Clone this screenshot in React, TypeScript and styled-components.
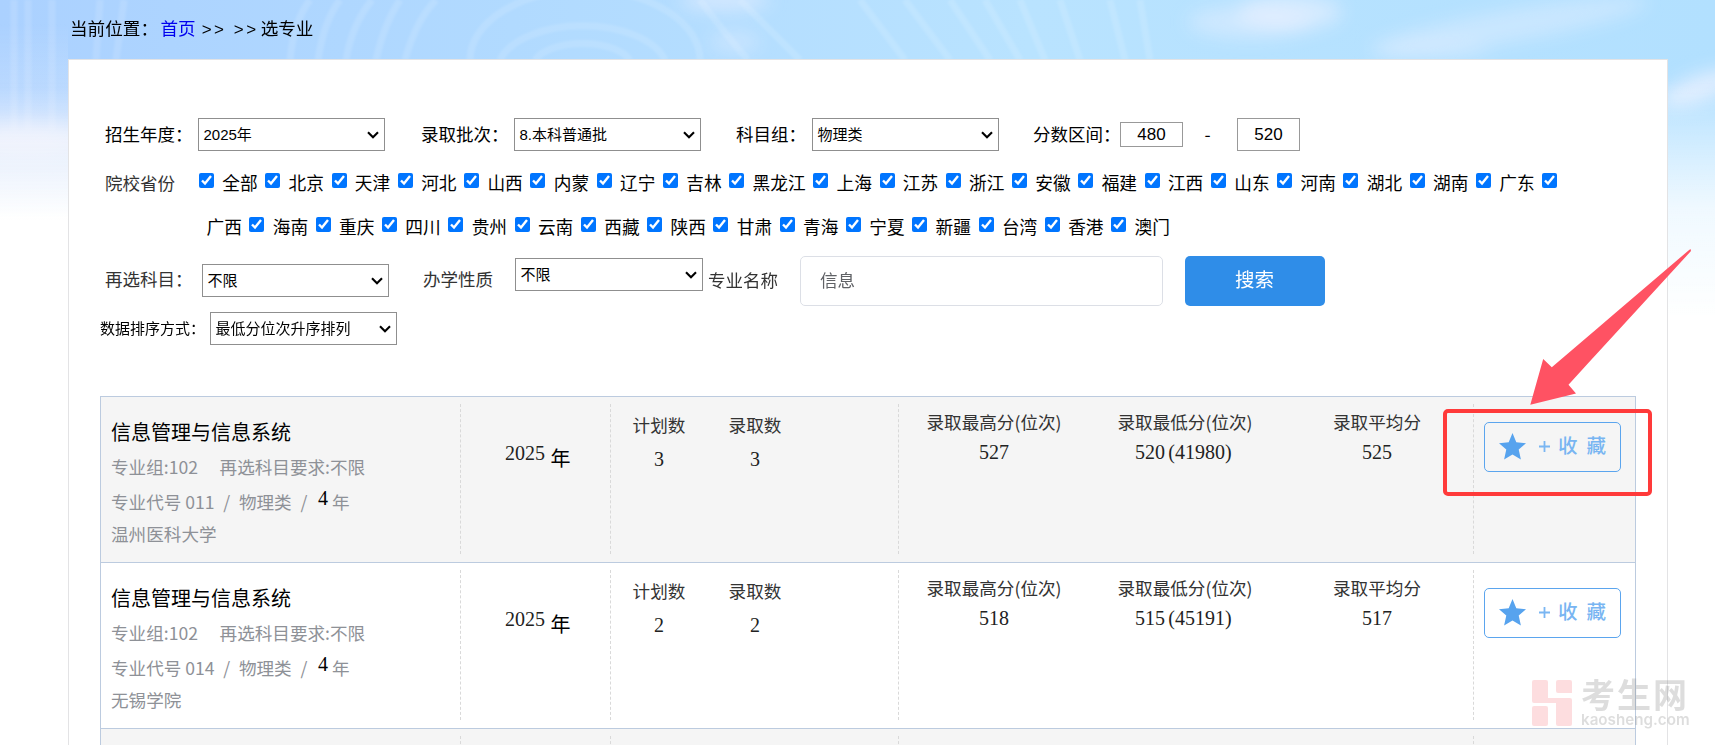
import React from 'react';
import styled, { createGlobalStyle } from 'styled-components';

const GlobalStyle = createGlobalStyle`
  * { box-sizing: border-box; }
  html, body { margin: 0; padding: 0; background: #fff; }
  body {
    font-family: "Noto Sans CJK SC", sans-serif;
    font-size: 17.6px;
    color: #000;
    overflow: hidden;
  }
`;

const Page = styled.div`
  position: relative;
  width: 1715px;
  height: 745px;
  overflow: hidden;
  padding-left: 68px;
`;

const Backdrop = styled.svg`
  position: absolute;
  left: 0;
  top: 0;
`;

const Breadcrumb = styled.nav`
  position: relative;
  height: 59px;
  padding-left: 2px;
  line-height: 55px;
  white-space: pre;
`;

const Crumb = styled.a`
  color: #0000ee;
  margin-left: 2.5px;
`;

const Arrows = styled.span`
  font-family: "Liberation Sans", sans-serif;
  font-size: 17px;
  letter-spacing: 2.5px;
  margin: 0 2px 0 6px;
`;

const Panel = styled.main`
  position: relative;
  width: 1600px;
  height: 760px;
  border: 1px solid #e3e3e5;
  background: #fff;
  padding: 58px 0 0 31px;
`;

const FilterRow = styled.div<{ $top?: number; $height: number; $left?: number; $align?: string }>`
  display: flex;
  align-items: ${p => p.$align ?? 'center'};
  height: ${p => p.$height}px;
  margin-top: ${p => p.$top ?? 0}px;
  padding-left: ${p => p.$left ?? 5}px;
`;

const Label = styled.label<{ $width: number; $gap?: number; $line?: number; $soft?: boolean; $small?: boolean }>`
  flex: none;
  width: ${p => p.$width}px;
  margin: 0 0 2px ${p => p.$gap ?? 0}px;
  line-height: ${p => p.$line ?? 31}px;
  color: ${p => (p.$soft ? '#333' : '#000')};
  font-size: ${p => (p.$small ? 15 : 17.5)}px;
  white-space: nowrap;
`;

const SelectBox = styled.div<{ $drop?: number; $width?: number }>`
  flex: none;
  display: flex;
  align-items: center;
  justify-content: space-between;
  width: ${p => p.$width ?? 187}px;
  height: 33px;
  margin-top: ${p => p.$drop ?? 0}px;
  padding: 0 5px 0 4.5px;
  border: 1px solid #8f8f8f;
  background: #fff;
  font: 15px/31px "Liberation Sans", "Noto Sans CJK SC", sans-serif;
`;

const ScoreInput = styled.div<{ $height: number }>`
  width: 63px;
  height: ${p => p.$height}px;
  border: 1px solid #999;
  font: 17px/1 "Liberation Sans", sans-serif;
  display: flex;
  align-items: center;
  justify-content: center;
`;

const Dash = styled.span`
  width: 54px;
  padding: 0 5px 3px 0;
  text-align: center;
`;

const Province = styled.label`
  display: flex;
  align-items: center;
  line-height: 42px;
  padding-bottom: 2px;
  font-size: 17.7px;
  white-space: nowrap;
`;

const Check = styled.input`
  flex: none;
  width: 15px;
  height: 15px;
  margin: 0 8.3px 4px 0;
`;

const LastCheck = styled(Check)`
  margin-bottom: 6px;
`;

const ProvinceName = styled.span`
  margin-right: 7.6px;
`;

const KeywordBox = styled.div`
  width: 363px;
  height: 50px;
  border: 1px solid #dcdfe6;
  border-radius: 5px;
  padding-left: 19px;
  line-height: 45px;
  color: #606266;
`;

const SearchButton = styled.button`
  width: 140px;
  height: 50px;
  margin-left: 22px;
  padding: 0 1px 4px 0;
  border: 0;
  border-radius: 5px;
  background: #2f8de8;
  color: #fff;
  font: 19.5px/46px "Noto Sans CJK SC", sans-serif;
`;

const Results = styled.section`
  width: 1536px;
  margin-top: 51px;
  border: 1px solid #bccbdf;
  border-bottom: 0;
`;

const ResultRow = styled.article<{ $shade: boolean }>`
  display: flex;
  height: 166px;
  padding: 7px 0 8px;
  border-bottom: 1px solid #bccbdf;
  background: ${p => (p.$shade ? '#f5f5f5' : '#fff')};
`;

const Cell = styled.div<{ $width: number }>`
  flex: none;
  display: flex;
  width: ${p => p.$width}px;
  height: 150px;
  border-right: 1px dashed #d9d9d9;
`;

const Major = styled.div`
  padding: 11px 0 0 10px;
  color: #8e9197;
  white-space: pre;
`;

const MajorName = styled.h3`
  margin: 0;
  height: 34px;
  color: #000;
  font-weight: 400;
  font-size: 20px;
  line-height: 33px;
`;

const MajorLine = styled.div<{ $height: number }>`
  height: ${p => p.$height}px;
  line-height: ${p => p.$height}px;
`;

const Slash = styled.span`
  margin: 0 8.7px;
`;

const Years = styled.span`
  display: inline-block;
  font: 20px/20px "Liberation Serif", serif;
  color: #000;
  margin: 0 4px 0 2px;
  transform: translateY(-4px);
`;

const YearCell = styled.div`
  display: flex;
  align-items: flex-start;
  padding: 34px 0 0 44px;
  font-size: 20px;
  line-height: 39px;
`;

const Num = styled.span<{ $line?: number }>`
  font-family: "Liberation Serif", serif;
  font-size: 20px;
  line-height: ${p => p.$line ?? 31}px;
  color: #222;
`;

const YearNum = styled(Num)`
  line-height: 31px;
  margin-right: 5.5px;
`;

const Paren = styled.span<{ $close?: boolean }>`
  display: inline-block;
  width: 10px;
  text-align: ${p => (p.$close ? 'left' : 'right')};
`;

const Stat = styled.div<{ $width: number; $top: number; $gap: number; $line: number }>`
  display: flex;
  flex-direction: column;
  align-items: center;
  width: ${p => p.$width}px;
  margin-left: ${p => p.$gap}px;
  padding-top: ${p => p.$top}px;
  line-height: ${p => p.$line}px;
  color: #333;
  white-space: nowrap;
`;

const CollectButton = styled.button`
  display: flex;
  align-items: center;
  width: 137px;
  height: 50px;
  margin: 18px 0 0 10px;
  padding: 0 0 2px 14px;
  border: 1.5px solid #5ba5ee;
  border-radius: 5px;
  background: transparent;
  color: #78b5f2;
  font: 500 19.5px/46px "Noto Sans CJK SC", sans-serif;
`;

const Plus = styled.svg`
  margin: 0 8px 0 13px;
`;

const CollectText = styled.span`
  letter-spacing: 9px;
  padding-bottom: 2px;
`;

const Callout = styled.div`
  position: absolute;
  left: 1443px;
  top: 409px;
  width: 209px;
  height: 87px;
  border: 4px solid #ff3a3a;
  border-radius: 5px;
`;

const Pointer = styled.svg`
  position: absolute;
  left: 1520px;
  top: 240px;
`;

const Watermark = styled.div`
  position: absolute;
  left: 1532px;
  top: 680px;
  display: flex;
  gap: 9px;
  color: rgba(130, 130, 130, 0.27);
`;

const WatermarkText = styled.div`
  display: flex;
  flex-direction: column;
`;

const WatermarkTitle = styled.span`
  font: 700 34px/27px "Noto Sans CJK SC", sans-serif;
  letter-spacing: 2px;
  height: 30px;
  white-space: nowrap;
`;

const WatermarkUrl = styled.span`
  font: 600 15.2px/18px Inter, sans-serif;
  margin-top: 1px;
  white-space: nowrap;
`;

const Sky = () => (
  <Backdrop width="1715" height="745" viewBox="0 0 1715 745">
    <defs>
      <linearGradient id="base" x1="0" x2="1" y1="0" y2="0">
        <stop offset="0" stopColor="#abd1ff" />
        <stop offset="0.3" stopColor="#b1daff" />
        <stop offset="0.6" stopColor="#b9e3ff" />
        <stop offset="1" stopColor="#b2e0ff" />
      </linearGradient>
      <linearGradient id="fadeLeft" x1="0" x2="0" y1="0" y2="1">
        <stop offset="0.1" stopColor="#fff" stopOpacity="0" />
        <stop offset="0.4" stopColor="#f8f7fd" stopOpacity="0.2" />
        <stop offset="0.66" stopColor="#f5f6fc" stopOpacity="0.8" />
        <stop offset="1" stopColor="#fff" />
      </linearGradient>
      <linearGradient id="fadeRight" x1="0" x2="0" y1="0" y2="1">
        <stop offset="0.25" stopColor="#fff" stopOpacity="0" />
        <stop offset="0.65" stopColor="#fff" stopOpacity="0.8" />
        <stop offset="1" stopColor="#fff" />
      </linearGradient>
      <filter id="soft" x="-30%" y="-100%" width="160%" height="300%">
        <feGaussianBlur stdDeviation="9" />
      </filter>
      <filter id="hazy" x="-5%" y="-10%" width="110%" height="120%">
        <feGaussianBlur stdDeviation="1" />
      </filter>
    </defs>
    <rect width="1715" height="320" fill="url(#base)" />
    <g fill="none" stroke="#fff" strokeOpacity="0.12" strokeWidth="7" filter="url(#hazy)">
      <path d="M14 0V130M28 0V130M52 0V130M100 0L96 60M124 0L116 60M290 60Q294 20 310 0M318 60Q324 20 340 0M346 60Q352 24 372 0M376 60Q384 24 400 0M405 60Q416 20 436 0" />
      <path d="M470 60A115 70 0 0 1 700 60M500 60A85 45 0 0 1 665 60M535 60A50 24 0 0 1 630 60M700 0Q730 40 748 60M740 0Q780 40 800 60" />
      <path d="M860 0L905 60M905 0L950 60M950 0L990 60M985 0L1020 60M1020 0L1045 60M1060 0L1080 60M1110 0L1125 60M1140 0L1150 60" />
    </g>
    <g fill="#f3f3ff">
      <g filter="url(#soft)">
        <ellipse cx="1250" cy="22" rx="62" ry="16" opacity="0.4" />
        <ellipse cx="1290" cy="12" rx="52" ry="18" opacity="0.5" />
        <ellipse cx="725" cy="0" rx="45" ry="10" opacity="0.55" />
        <ellipse cx="735" cy="42" rx="25" ry="10" opacity="0.35" />
        <ellipse cx="1510" cy="26" rx="140" ry="16" opacity="0.35" transform="rotate(-10 1510 26)" />
        <ellipse cx="1430" cy="50" rx="60" ry="10" opacity="0.25" />
      </g>
      <g filter="url(#soft)">
        <ellipse cx="1700" cy="88" rx="42" ry="13" opacity="0.7" transform="rotate(-20 1700 88)" />
        <ellipse cx="25" cy="140" rx="65" ry="16" opacity="0.7" />
      </g>
    </g>
    <rect width="68" height="220" fill="url(#fadeLeft)" />
    <rect y="220" width="68" height="110" fill="#fff" />
    <rect x="1667" width="48" height="320" fill="url(#fadeRight)" />
    <rect y="319" width="1715" height="426" fill="#fff" />
  </Backdrop>
);

const Select = ({ value, drop, width }: { value: string; drop?: number; width?: number }) => (
  <SelectBox $drop={drop} $width={width}>
    <span>{value}</span>
    <svg width="12" height="8" viewBox="0 0 12 8">
      <path d="M1 1.2L6 6.2L11 1.2" fill="none" stroke="#000" strokeWidth="2.1" />
    </svg>
  </SelectBox>
);

const firstLine = ['全部', '北京', '天津', '河北', '山西', '内蒙', '辽宁', '吉林', '黑龙江', '上海', '江苏', '浙江', '安徽', '福建', '江西', '山东', '河南', '湖北', '湖南', '广东'];
const secondLine = ['海南', '重庆', '四川', '贵州', '云南', '西藏', '陕西', '甘肃', '青海', '宁夏', '新疆', '台湾', '香港', '澳门'];

const ProvinceOption = ({ name }: { name: string }) => (
  <Province>
    <Check type="checkbox" defaultChecked />
    <ProvinceName>{name}</ProvinceName>
  </Province>
);

interface Result {
  name: string;
  group: string;
  code: string;
  school: string;
  plan: number;
  admitted: number;
  high: number;
  low: number;
  rank: number;
  average: number;
}

const results: Result[] = [
  { name: '信息管理与信息系统', group: '102', code: '011', school: '温州医科大学', plan: 3, admitted: 3, high: 527, low: 520, rank: 41980, average: 525 },
  { name: '信息管理与信息系统', group: '102', code: '014', school: '无锡学院', plan: 2, admitted: 2, high: 518, low: 515, rank: 45191, average: 517 },
];

const ResultItem = ({ item, shade }: { item: Result; shade: boolean }) => (
  <ResultRow $shade={shade}>
    <Cell $width={360}>
      <Major>
        <MajorName>{item.name}</MajorName>
        <MajorLine $height={35}>专业组:{item.group}{'\u2003 '}再选科目要求:不限</MajorLine>
        <MajorLine $height={35}>
          专业代号 {item.code}<Slash>/</Slash>物理类<Slash>/</Slash><Years>4</Years>年
        </MajorLine>
        <MajorLine $height={29}>{item.school}</MajorLine>
      </Major>
    </Cell>
    <Cell $width={150}>
      <YearCell><YearNum>2025</YearNum>年</YearCell>
    </Cell>
    <Cell $width={288}>
      <Stat $width={54} $gap={21} $top={4} $line={34}><span>计划数</span><Num $line={35}>{item.plan}</Num></Stat>
      <Stat $width={54} $gap={42} $top={4} $line={34}><span>录取数</span><Num $line={35}>{item.admitted}</Num></Stat>
    </Cell>
    <Cell $width={575}>
      <Stat $width={134} $gap={28} $top={2} $line={31}><span>录取最高分(位次)</span><Num>{item.high}</Num></Stat>
      <Stat $width={134} $gap={57} $top={2} $line={31}>
        <span>录取最低分(位次)</span>
        <Num>{item.low}<Paren>(</Paren>{item.rank}<Paren $close>)</Paren></Num>
      </Stat>
      <Stat $width={88} $gap={81} $top={2} $line={31}><span>录取平均分</span><Num>{item.average}</Num></Stat>
    </Cell>
    <CollectButton>
      <svg width="27" height="27" viewBox="0 0 27 27">
        <path d="M13.5 0L17.3 9.3L27 10.2L19.7 16.6L21.9 26.5L13.5 21.5L5.1 26.5L7.3 16.6L0 10.2L9.7 9.3Z" fill="#57a3ee" />
      </svg>
      <Plus width="11" height="11" viewBox="0 0 11 11">
        <path d="M5.5 0V11M0 5.5H11" stroke="#7ab6f2" strokeWidth="1.8" />
      </Plus>
      <CollectText>收藏</CollectText>
    </CollectButton>
  </ResultRow>
);

export default function App() {
  return (
    <Page>
      <GlobalStyle />
      <Sky />
      <Breadcrumb>
        当前位置：<Crumb>首页</Crumb><Arrows>&gt;&gt; &gt;&gt;</Arrows>选专业
      </Breadcrumb>
      <Panel>
        <FilterRow $height={33}>
          <Label $width={93}>招生年度：</Label>
          <Select value="2025年" />
          <Label $width={93} $gap={36}>录取批次：</Label>
          <Select value="8.本科普通批" />
          <Label $width={76} $gap={35}>科目组：</Label>
          <Select value="物理类" />
          <Label $width={87} $gap={34}>分数区间：</Label>
          <ScoreInput $height={25}>480</ScoreInput>
          <Dash>-</Dash>
          <ScoreInput $height={33}>520</ScoreInput>
        </FilterRow>
        <FilterRow $height={44} $top={10}>
          <Label $width={94} $soft>院校省份</Label>
          {firstLine.map(name => <ProvinceOption key={name} name={name} />)}
          <LastCheck type="checkbox" defaultChecked />
        </FilterRow>
        <FilterRow $height={44} $left={106.5}>
          <Province><ProvinceName>广西</ProvinceName></Province>
          {secondLine.map(name => <ProvinceOption key={name} name={name} />)}
        </FilterRow>
        <FilterRow $height={50} $top={7} $align="flex-start">
          <Label $width={97} $line={46} $soft>再选科目：</Label>
          <Select value="不限" drop={8} />
          <Label $width={92} $gap={34} $line={46} $soft>办学性质</Label>
          <Select value="不限" drop={2} width={188} />
          <Label $width={92} $gap={5} $line={48} $soft>专业名称</Label>
          <KeywordBox>信息</KeywordBox>
          <SearchButton>搜索</SearchButton>
        </FilterRow>
        <FilterRow $height={33} $top={6} $left={0}>
          <Label $width={110} $small>数据排序方式：</Label>
          <Select value="最低分位次升序排列" />
        </FilterRow>
        <Results>
          {results.map((item, i) => (
            <ResultItem key={item.code} item={item} shade={i % 2 === 0} />
          ))}
          <ResultRow $shade>
            <Cell $width={360} />
            <Cell $width={150} />
            <Cell $width={288} />
            <Cell $width={575} />
          </ResultRow>
        </Results>
      </Panel>
      <Callout />
      <Pointer width="180" height="170" viewBox="1520 240 180 170">
        <path d="M1688.5 250.5L1690.5 249L1691 251L1568.5 384.7L1576 393.5L1530.3 404.8L1543.2 359L1551.8 367.2Z" fill="#ff5263" />
      </Pointer>
      <Watermark>
        <svg width="40" height="46" viewBox="0 0 40 46">
          <path d="M2 0H14Q16 0 16 2V18H38Q40 18 40 20V44Q40 46 38 46H26Q24 46 24 44V23H2Q0 23 0 21V2Q0 0 2 0ZM26 0H38Q40 0 40 2V13H26Q24 13 24 11V2Q24 0 26 0ZM2 26H14Q16 26 16 28V44Q16 46 14 46H2Q0 46 0 44V28Q0 26 2 26Z" fill="#f4444c" fillOpacity="0.18" />
        </svg>
        <WatermarkText>
          <WatermarkTitle>考生网</WatermarkTitle>
          <WatermarkUrl>kaosheng.com</WatermarkUrl>
        </WatermarkText>
      </Watermark>
    </Page>
  );
}
